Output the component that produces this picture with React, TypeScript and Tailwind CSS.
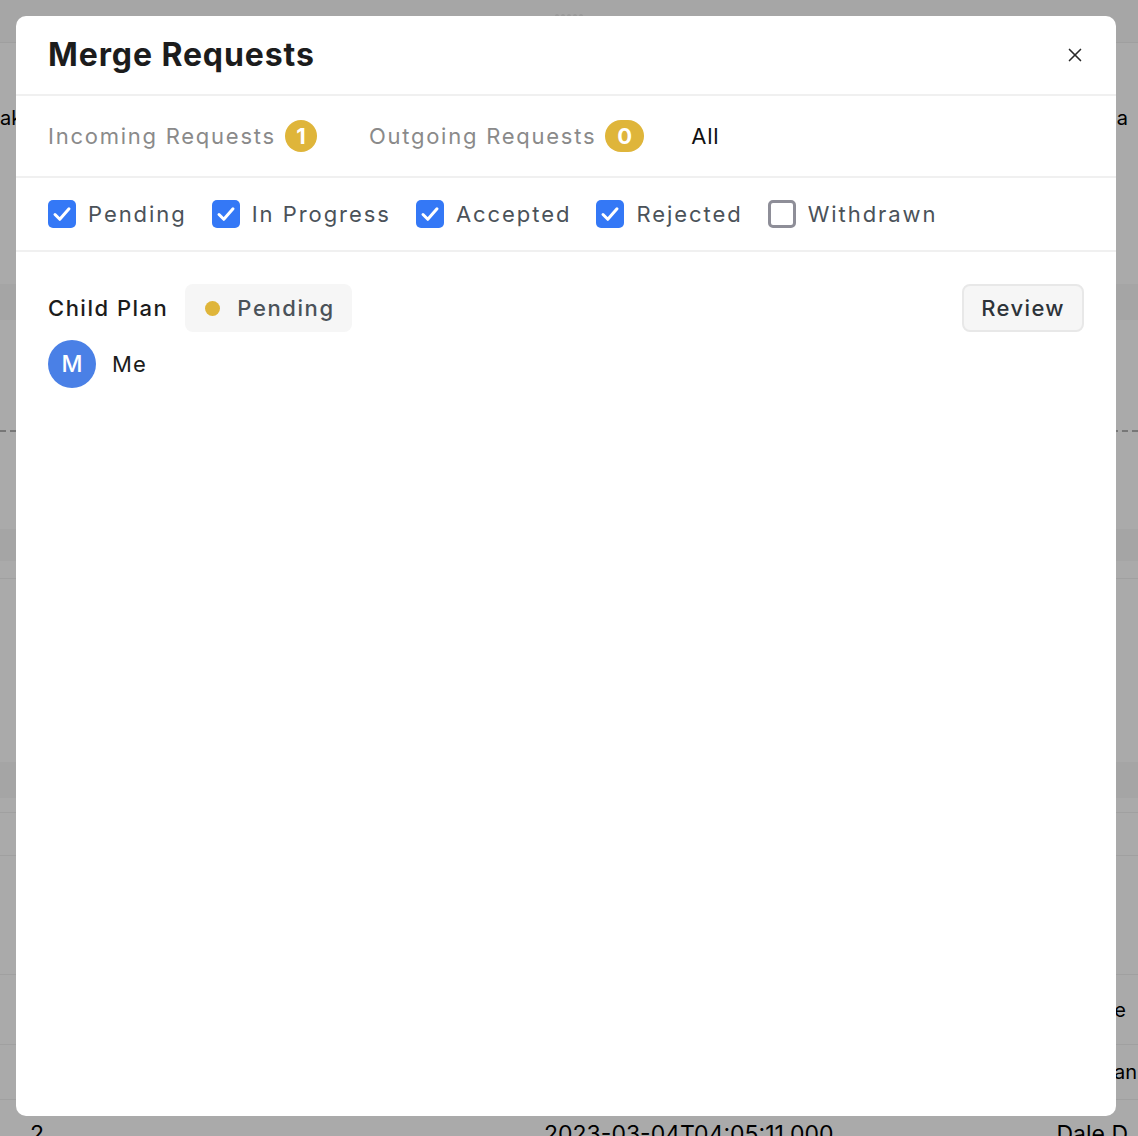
import { X } from "lucide-react";

const filters = [
    { label: "Pending", checked: true },
    { label: "In Progress", checked: true },
    { label: "Accepted", checked: true },
    { label: "Rejected", checked: true },
    { label: "Withdrawn", checked: false },
];

function Checkbox({ checked }: { checked: boolean }) {
    if (!checked) {
        return <span className="size-[28px] shrink-0 rounded-[5px] border-[3px] border-[#8e8e98] bg-white" />;
    }
    return (
        <span className="size-[28px] shrink-0 rounded-[5px] bg-[#3478f6] flex items-center justify-center">
            <svg width="28" height="28" viewBox="0 0 28 28" fill="none">
                <path d="M7 14.5l4.8 4.8L21 8.8" stroke="white" strokeWidth="3" strokeLinecap="round" strokeLinejoin="round" />
            </svg>
        </span>
    );
}

function Backdrop() {
    // dimmed page behind the modal
    return (
        <div className="flex flex-col text-[20px] text-black">
            <div className="h-[43px] bg-[#a6a6a6] border-b border-[#9f9f9f] flex justify-center pt-[14px]">
                <div className="flex gap-[2px]">
                    {[0, 1, 2, 3, 4].map((i) => (
                        <span key={i} className="size-[4px] rounded-full bg-[#9a9a9a]" />
                    ))}
                </div>
            </div>
            <div className="h-[241px] flex justify-between items-start pt-[60px]">
                <span>ak</span>
                <span className="mr-[10px]">a</span>
            </div>
            <div className="h-[36px] bg-[#a5a5a5]" />
            <div className="h-[112px] flex items-end">
                <div className="w-full border-b-2 border-dashed border-[#777]" />
            </div>
            <div className="h-[97px]" />
            <div className="h-[32px] bg-[#a5a5a5]" />
            <div className="h-[18px] border-b border-[#a0a0a0]" />
            <div className="h-[183px]" />
            <div className="h-[36px] bg-[#a5a5a5]" />
            <div className="h-[15px] border-b border-[#a0a0a0]" />
            <div className="h-[43px] border-b border-[#a0a0a0]" />
            <div className="h-[119px] border-b border-[#a0a0a0]" />
            <div className="h-[70px] border-b border-[#a0a0a0] flex justify-end items-center">
                <span className="mr-[12px]">Date</span>
            </div>
            <div className="h-[55px] border-b border-[#a0a0a0] flex justify-end items-center">
                <span className="mr-[1px]">an</span>
            </div>
            <div className="h-[30px] flex items-start justify-between pl-[30px] pr-[10px] pt-[17px] text-[23px]">
                <span>2</span>
                <span className="ml-[500px]">2023-03-04T04:05:11.000</span>
                <span className="ml-auto">Dale D</span>
            </div>
        </div>
    );
}

export default function App() {
    return (
        <div className="relative w-[1138px] h-[1136px] overflow-hidden bg-[#aaaaaa] font-['Inter','Liberation_Sans',sans-serif]">
            <Backdrop />

            {/* Modal */}
            <div className="absolute left-4 top-4 w-[1100px] h-[1100px] bg-white rounded-[10px] flex flex-col">
                <div className="h-[80px] border-b-2 border-[#f0f0f0] flex items-center justify-between pl-8 pr-[30px]">
                    <h2 className="text-[32px] font-bold text-[#1c1c1c] tracking-[0.9px]">Merge Requests</h2>
                    <X size={22} strokeWidth={1.8} className="text-[#2a2a2a]" />
                </div>

                <div className="h-[82px] border-b-2 border-[#f0f0f0] flex items-center pl-8 text-[22px] tracking-[1.75px]">
                    <div className="flex items-center gap-[9px] text-[#8a8a8a]">
                        <span>Incoming Requests</span>
                        <span className="h-[32px] min-w-[32px] rounded-full bg-[#dfb53a] text-white font-bold text-[22px] tracking-normal flex items-center justify-center">1</span>
                    </div>
                    <div className="flex items-center gap-[9px] text-[#8a8a8a] ml-[52px]">
                        <span>Outgoing Requests</span>
                        <span className="h-[32px] px-[12px] rounded-full bg-[#dfb53a] text-white font-bold text-[22px] tracking-normal flex items-center justify-center">0</span>
                    </div>
                    <span className="ml-[47px] text-[#111] tracking-[0.8px]">All</span>
                </div>

                <div className="h-[74px] border-b-2 border-[#f0f0f0] flex items-center pl-8 gap-[25px] text-[22px] text-[#4b5259] tracking-[1.95px]">
                    {filters.map((f) => (
                        <label key={f.label} className="flex items-center gap-[12px]">
                            <Checkbox checked={f.checked} />
                            <span>{f.label}</span>
                        </label>
                    ))}
                </div>

                <div className="pt-[32px] px-8 flex justify-between items-start">
                    <div className="flex flex-col gap-[8px]">
                        <div className="flex items-center gap-[17px]">
                            <span className="text-[22px] text-[#1c1c1c] font-medium tracking-[1.5px]">Child Plan</span>
                            <span className="h-[48px] pl-[20px] pr-[17px] rounded-[8px] bg-[#f6f6f6] flex items-center gap-[17px] text-[22px] text-[#4b5259] font-medium tracking-[1.6px]">
                                <span className="size-[15px] rounded-full bg-[#dfb53a]" />
                                Pending
                            </span>
                        </div>
                        <div className="flex items-center gap-[16px]">
                            <span className="size-[48px] rounded-full bg-[#4a80e6] text-white text-[23px] font-medium flex items-center justify-center">M</span>
                            <span className="text-[22px] text-[#1c1c1c] tracking-[1.2px]">Me</span>
                        </div>
                    </div>
                    <button className="h-[48px] px-[17px] rounded-[8px] bg-[#f6f6f6] border-2 border-[#e8e8e8] text-[22px] font-medium text-[#2d3339] tracking-[1.4px]">
                        Review
                    </button>
                </div>
            </div>
        </div>
    );
}
